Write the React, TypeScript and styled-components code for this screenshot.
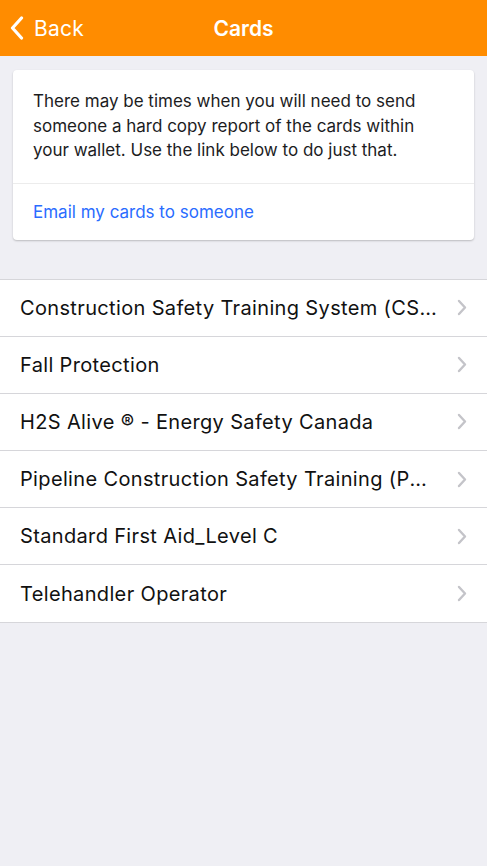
import React from "react";
import styled, { createGlobalStyle } from "styled-components";

const GlobalStyle = createGlobalStyle`
  html, body {
    margin: 0;
    padding: 0;
    background: #efeff4;
    font-family: "Inter", "Liberation Sans", sans-serif;
  }
`;

const Page = styled.div`
  width: 487px;
  min-height: 866px;
  background: #efeff4;
`;

const NavBar = styled.header`
  position: relative;
  height: 56px;
  display: flex;
  align-items: center;
  justify-content: center;
  background: #ff8c00;
  color: #fff;
`;

const BackButton = styled.button`
  position: absolute;
  left: 10px;
  top: 0;
  height: 56px;
  display: flex;
  align-items: center;
  gap: 10px;
  padding: 0;
  border: none;
  background: none;
  color: #fff;
  font-family: inherit;
  font-size: 21px;
  font-weight: 400;
  letter-spacing: 0.2px;
`;

const Title = styled.h1`
  margin: 0;
  font-size: 21px;
  font-weight: 600;
`;

const InfoCard = styled.section`
  margin: 14px 13px 0;
  background: #fff;
  border-radius: 4px;
  box-shadow: 0 1px 2px rgba(0, 0, 0, 0.22);
`;

const InfoText = styled.p`
  margin: 0;
  padding: 19px 20px 20px 20px;
  font-size: 17px;
  line-height: 24.5px;
  color: #1c1c1e;
  border-bottom: 1px solid #ececec;
`;

const EmailLink = styled.a`
  display: block;
  padding: 17px 20px 17px;
  font-size: 17px;
  line-height: 22px;
  color: #2a6cff;
  text-decoration: none;
`;

const List = styled.ul`
  margin: 39px 0 0;
  padding: 0;
  list-style: none;
  background: #fff;
  border-top: 1px solid #d6d6da;
`;

const Row = styled.li`
  height: 56.2px;
  display: flex;
  align-items: center;
  padding: 0 20px;
  border-bottom: 1px solid #d6d6da;
`;

const RowLabel = styled.span`
  flex: 1;
  min-width: 0;
  font-size: 20px;
  letter-spacing: 0.35px;
  color: #111;
  white-space: nowrap;
  overflow: hidden;
  text-overflow: ellipsis;
`;

const Chevron = styled.svg`
  flex: none;
  margin-left: 16px;
`;

const cards = [
  "Construction Safety Training System (CSTS-09)",
  "Fall Protection",
  "H2S Alive \u00ae - Energy Safety Canada",
  "Pipeline Construction Safety Training (PCST)",
  "Standard First Aid_Level C",
  "Telehandler Operator",
];

export default function App() {
  return (
    <Page>
      <GlobalStyle />
      <NavBar>
        <BackButton>
          <svg width="14" height="24" viewBox="0 0 14 24">
            <path
              d="M11.5 2 L2.5 12 L11.5 22"
              fill="none"
              stroke="#fff"
              strokeWidth="3.2"
              strokeLinecap="round"
              strokeLinejoin="round"
            />
          </svg>
          Back
        </BackButton>
        <Title>Cards</Title>
      </NavBar>
      <InfoCard>
        <InfoText>
          There may be times when you will need to send someone a hard copy
          report of the cards within your wallet. Use the link below to do just
          that.
        </InfoText>
        <EmailLink href="#">Email my cards to someone</EmailLink>
      </InfoCard>
      <List>
        {cards.map((c) => (
          <Row key={c}>
            <RowLabel>{c}</RowLabel>
            <Chevron width="10" height="17" viewBox="0 0 10 17">
              <path
                d="M2 2 L8 8.5 L2 15"
                fill="none"
                stroke="#c4c4c9"
                strokeWidth="2.4"
                strokeLinecap="round"
                strokeLinejoin="round"
              />
            </Chevron>
          </Row>
        ))}
      </List>
    </Page>
  );
}
